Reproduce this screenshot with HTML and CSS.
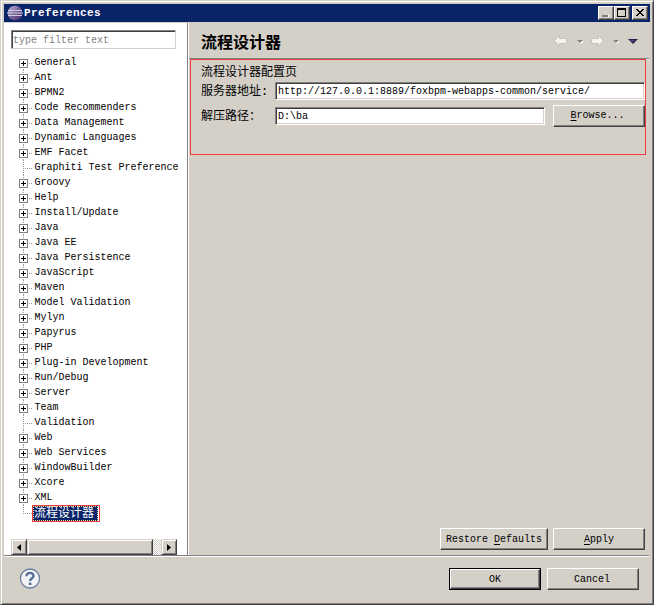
FILE: index.html
```html
<!DOCTYPE html>
<html lang="zh-CN">
<head>
<meta charset="utf-8">
<title>Preferences</title>
<link rel="stylesheet" href="styles.css">
</head>
<body>
<div class="window">
  <div class="titlebar">
    <svg class="logo" width="16" height="16" viewBox="0 0 16 16">
      <defs><linearGradient id="orb" x1="0" y1="0" x2="1" y2="1"><stop offset="0" stop-color="#c8bcda"/><stop offset=".5" stop-color="#76639a"/><stop offset="1" stop-color="#4a2c68"/></linearGradient></defs>
      <circle cx="8" cy="8" r="7.300" fill="url(#orb)"/>
      <path d="M1 5.500h14M0 8h16M1 10.500h14" stroke="#d4cce2" stroke-width="1"/>
    </svg>
    <span class="title">Preferences</span>
    <div class="winbtns">
      <span class="wb"><svg width="12" height="10"><path d="M4 9h6v1H4zM9 8h1v2H9z" fill="#fff"/><path d="M3 8h6v2H3z" fill="#808080"/></svg></span>
      <span class="wb"><svg width="12" height="10"><path d="M2 1h9v9H2zM3 3v6h7V3z" fill="#000" fill-rule="evenodd"/></svg></span>
      <span class="wb close"><svg width="12" height="10" shape-rendering="crispEdges"><path transform="translate(1 1)" d="M2 1h2v1h1v1h2V2h1V1h2v1H9v1H8v1H7v1h1v1h1v1h1v1H8V7H7V6H5v1H4v1H2V7h1V6h1V5h1V4H4V3H3V2H2z"/></svg></span>
    </div>
  </div>
  <div class="main">
    <div class="side">
      <div class="filter">type filter text</div>
      <ul class="tree">
        <li><i></i>General</li>
        <li><i></i>Ant</li>
        <li><i></i>BPMN2</li>
        <li><i></i>Code Recommenders</li>
        <li><i></i>Data Management</li>
        <li><i></i>Dynamic Languages</li>
        <li><i></i>EMF Facet</li>
        <li class="leaf"><i></i>Graphiti Test Preference</li>
        <li><i></i>Groovy</li>
        <li><i></i>Help</li>
        <li><i></i>Install/Update</li>
        <li><i></i>Java</li>
        <li><i></i>Java EE</li>
        <li><i></i>Java Persistence</li>
        <li><i></i>JavaScript</li>
        <li><i></i>Maven</li>
        <li><i></i>Model Validation</li>
        <li><i></i>Mylyn</li>
        <li><i></i>Papyrus</li>
        <li><i></i>PHP</li>
        <li><i></i>Plug-in Development</li>
        <li><i></i>Run/Debug</li>
        <li><i></i>Server</li>
        <li><i></i>Team</li>
        <li class="leaf"><i></i>Validation</li>
        <li><i></i>Web</li>
        <li><i></i>Web Services</li>
        <li><i></i>WindowBuilder</li>
        <li><i></i>Xcore</li>
        <li><i></i>XML</li>
        <li class="leaf last"><i></i><span class="mark"><span class="selected">流程设计器</span></span></li>
      </ul>
      <div class="scroll">
        <span class="sb"><svg width="4" height="7"><path d="M4 0v7L0 3.500z"/></svg></span>
        <span class="thumb"></span>
        <span class="track"></span>
        <span class="sb"><svg width="4" height="7"><path d="M0 0v7l4-3.500z"/></svg></span>
      </div>
    </div>
    <div class="page">
      <div class="head">
        <h1>流程设计器</h1>
        <svg class="nav" width="88" height="14" viewBox="0 0 88 14">
          <path d="M.5 6.500l5-5v3h7v5h-7v3z" fill="#f4f3ee" stroke="#c6c2b8"/>
          <path d="M24 7h6l-3 3z" fill="#fff"/><path d="M23 6h6l-3 3z" fill="#858178"/>
          <path d="M49.500 6.500l-5-5v3h-7v5h7v3z" fill="#f4f3ee" stroke="#c6c2b8"/>
          <path d="M60 7h6l-3 3z" fill="#fff"/><path d="M59 6h6l-3 3z" fill="#858178"/>
          <path d="M74 5h10l-5 5z" fill="#24204a"/><path d="M76 6h5l-2.500 2z" fill="#4f4a86"/>
        </svg>
      </div>
      <div class="form">
        <div class="desc">流程设计器配置页</div>
        <div class="row"><label>服务器地址:</label><div class="input">http://127.0.0.1:8889/foxbpm-webapps-common/service/</div></div>
        <div class="row path"><label>解压路径：</label><div class="input">D:\ba</div><div class="btn browse"><span><u>B</u>rowse...</span></div></div>
      </div>
      <div class="actions">
        <div class="btn restore"><span>Restore <u>D</u>efaults</span></div>
        <div class="btn apply"><span><u>A</u>pply</span></div>
      </div>
    </div>
  </div>
  <div class="foot">
    <svg class="help" width="22" height="22" viewBox="0 0 22 22">
      <circle cx="11" cy="10.500" r="9.500" fill="#f3f3f5" stroke="#6b7f9f" stroke-width="1.300"/>
      <path d="M7.500 8.300C7.500 3.600 14.600 4 14.500 8C14.400 10.300 11.100 10.300 11.100 13" fill="none" stroke="#566f98" stroke-width="2.400"/>
      <path d="M9.800 14.500h2.600v2.500H9.800z" fill="#566f98"/>
    </svg>
    <div class="okframe"><div class="btn"><span>OK</span></div></div>
    <div class="btn cancel"><span>Cancel</span></div>
  </div>
</div>
</body>
</html>
```
FILE: styles.css
```css
* { box-sizing: border-box; }
body { margin: 0; background: #d4d0c8; }
.window {
  width: 654px; height: 605px; padding: 3px;
  display: flex; flex-direction: column;
  background: #d4d0c8;
  border: 1px solid; border-color: #d4d0c8 #404040 #404040 #d4d0c8;
  box-shadow: inset 1px 1px #fff, inset -1px -1px #808080;
  font: 10px/15px "Liberation Mono", "Noto Sans CJK SC", monospace;
  color: #000;
}
.titlebar { height: 18px; display: flex; align-items: center; background: #0a246a; padding: 0 2px 0 3px; flex: none; }
.title { flex: 1; margin-left: 1px; color: #fff; font-weight: bold; font-size: 11px; letter-spacing: .4px; }
.winbtns { display: flex; }
.wb {
  width: 16px; height: 14px; background: #d4d0c8;
  border: 1px solid; border-color: #fff #404040 #404040 #fff;
  box-shadow: inset -1px -1px #808080;
}
.wb svg { display: block; }
.close { margin-left: 2px; }

.main { display: flex; height: 533px; margin-right: 1px; border-bottom: 1px solid #808080; box-shadow: 0 1px #fff; margin-top: 1px; flex: none; }
.side { width: 184px; background: #fff; border-right: 1px solid #808080; padding: 7px 0 0 7px; display: flex; flex-direction: column; }
.filter {
  width: 165px; height: 19px; padding-left: 1px; line-height: 19px; color: #808080; white-space: nowrap;
  border: 1px solid; border-color: #808080 #d4d0c8 #d4d0c8 #808080;
  box-shadow: inset 1px 1px #404040;
}
.tree { list-style: none; margin: 6px 0 0; padding: 0 0 0 8px; width: 167px; height: 484px; flex: none; }
.tree li { display: flex; height: 15px; white-space: nowrap; line-height: 16px; }
.tree i {
  flex: none; width: 15.5px; height: 15px;
  background:
    linear-gradient(#000, #000) 2px 8px / 5px 1px no-repeat,
    linear-gradient(#000, #000) 4px 6px / 1px 5px no-repeat,
    linear-gradient(#fff, #fff) 1px 5px / 7px 7px no-repeat,
    linear-gradient(#808080, #808080) 0 4px / 9px 9px no-repeat,
    repeating-linear-gradient(90deg, #999 0 1px, transparent 1px 2px) 10px 8px / 3px 1px no-repeat,
    repeating-linear-gradient(#999 0 1px, transparent 1px 2px) 4px 0 / 1px 15px no-repeat;
}
.tree li:first-child i { background-size: 5px 1px, 1px 5px, 7px 7px, 9px 9px, 3px 1px, 1px 7px; background-position: 2px 8px, 4px 6px, 1px 5px, 0 4px, 10px 8px, 4px 8px; }
.tree .leaf i {
  background:
    repeating-linear-gradient(90deg, #999 0 1px, transparent 1px 2px) 4px 8px / 9px 1px no-repeat,
    repeating-linear-gradient(#999 0 1px, transparent 1px 2px) 4px 0 / 1px 15px no-repeat;
}
.tree .last { height: 17px; }
.tree .last i { width: 13px; background-size: 9px 1px, 1px 9px; }
.mark { border: 1px solid #f03c3c; width: 68px; height: 17px; }
.selected { display: block; width: 65px; height: 15px; padding-left: 1px; background: #0a246a; color: #fff; font-size: 12px; line-height: 16px; outline: 1px dotted #f5db95; outline-offset: -1px; }
.scroll { display: flex; width: 166px; height: 16px; flex: none; }
.sb, .thumb {
  background: #d4d0c8; border: 1px solid; border-color: #d4d0c8 #404040 #404040 #d4d0c8;
  box-shadow: inset 1px 1px #fff, inset -1px -1px #808080;
}
.sb { width: 16px; display: flex; align-items: center; justify-content: center; }
.thumb { width: 126px; }
.track { flex: 1; background: repeating-conic-gradient(#fff 0 25%, #d4d0c8 0 50%) 0 0 / 2px 2px; }

.page { flex: 1; display: flex; flex-direction: column; border-left: 1px solid #fff; }
.head { height: 36px; display: flex; align-items: center; justify-content: space-between; padding: 0 7px 0 12px; border-bottom: 1px solid #808080; box-shadow: 0 1px #fff; }
h1 { margin: 0; font: bold 16px/34px "Noto Sans CJK SC", sans-serif; }
.form { width: 456px; height: 96px; margin-left: 1px; border: 1px solid #f03c3c; padding: 4px 0 0 9px; position: relative; }
.desc { font-size: 12px; line-height: 18px; height: 17px; padding-left: 1px; }
.row { display: flex; height: 19px; align-items: center; }
.row label { width: 75px; padding-left: 1px; font-size: 12px; line-height: 19px; padding-top: 4px; white-space: nowrap; }
.input {
  width: 370px; height: 18px; padding-left: 2px; line-height: 17px; background: #fff;
  border: 1px solid; border-color: #808080 #fff #fff #808080;
  box-shadow: inset 1px 1px #404040, inset -1px -1px #d4d0c8;
}
.path { margin-top: 4px; height: 23px; }
.path .input { width: 270px; }
.btn {
  display: flex; align-items: center; justify-content: center; height: 22px;
  border: 1px solid; border-color: #fff #404040 #404040 #fff;
  box-shadow: inset -1px -1px #808080; background: #d4d0c8; white-space: nowrap;
}
.btn u { text-underline-offset: 2px; text-decoration-thickness: 1px; }
.browse { width: 92px; margin-left: 8px; }
.browse span { margin-right: 3px; }
.actions { margin-top: auto; display: flex; justify-content: flex-end; gap: 5px; padding: 0 4px 5px 0; }
.restore { width: 108px; }
.apply { width: 92px; }
.foot { flex: 1; display: flex; align-items: flex-start; padding: 12px 11px 0 15px; }
.help { margin-right: auto; }
.okframe { width: 92px; border: 1px solid #000; height: 22px; margin-right: 6px; }
.okframe .btn { height: 20px; }
.cancel { width: 92px; }
.cancel span { margin-right: 2px; }
```
